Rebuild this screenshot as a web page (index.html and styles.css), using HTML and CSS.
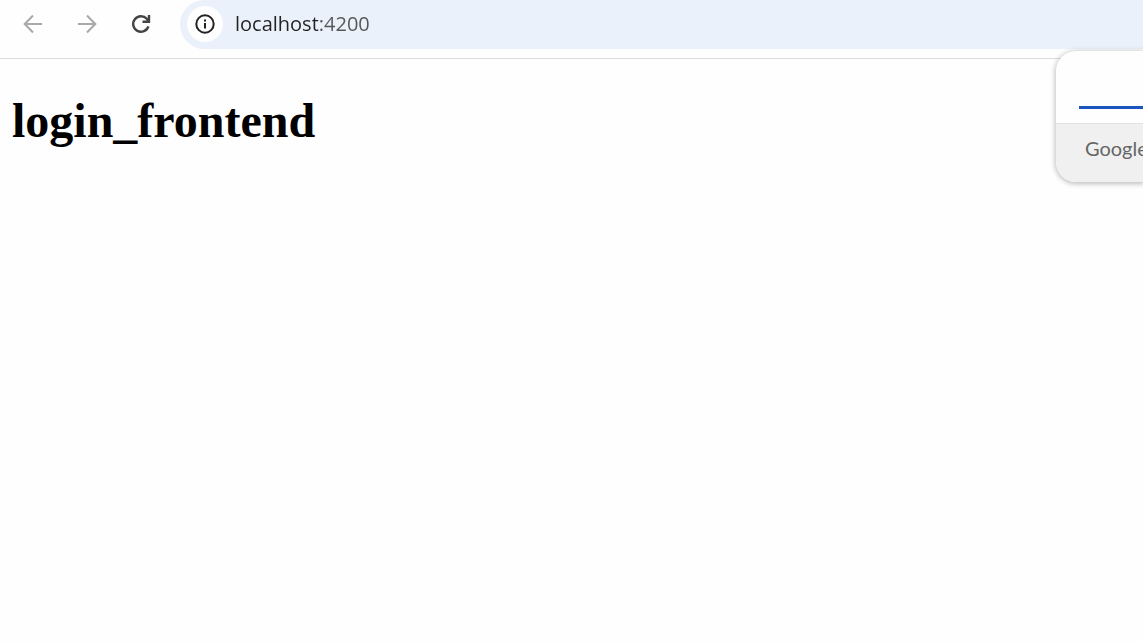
FILE: index.html
```html
<!DOCTYPE html>
<html lang="en">
<head>
<meta charset="utf-8">
<meta name="viewport" content="width=device-width, initial-scale=1">
<title>login_frontend</title>
<link rel="stylesheet" href="styles.css">
</head>
<body>
<header class="toolbar">
  <nav class="nav" aria-label="Browser navigation">
    <button class="nav-button" type="button" aria-label="Back">
      <svg viewBox="0 0 20 20"><path d="M19 10H2M10 1.5L1.7 10L10 18.5"/></svg>
    </button>
    <button class="nav-button" type="button" aria-label="Forward">
      <svg viewBox="0 0 20 20"><path d="M1 10H18M10 1.5L18.3 10L10 18.5"/></svg>
    </button>
    <button class="nav-button nav-button-active" type="button" aria-label="Reload">
      <svg viewBox="0 0 20 20"><path d="M17.4 12.4A7.8 7.8 0 1 1 15.8 4.8L17.8 7.2M18 1V7.7H11.5"/></svg>
    </button>
  </nav>
  <form class="omnibox">
    <button class="site-info" type="button" aria-label="View site information">
      <svg viewBox="0 0 20 20"><circle cx="10" cy="10" r="8.7"/><path d="M10 9V14.5M10 5.5V7.5"/></svg>
    </button>
    <input class="address" type="text" value="localhost:4200" aria-label="Address">
  </form>
</header>
<main class="page">
  <h1 class="title">login_frontend</h1>
</main>
<aside class="popup" aria-label="Google Translate">
  <div class="popup-tabs"><div class="popup-tab"></div></div>
  <div class="popup-footer">Google</div>
</aside>
</body>
</html>
```
FILE: styles.css
```css
* {
  box-sizing: border-box;
}

body {
  position: relative;
  min-height: 100vh;
  margin: 0;
  background: #fefefe;
  color: #000;
  font-family: "Liberation Serif", "Times New Roman", serif;
}

button {
  padding: 0;
  border: 0;
  background: none;
}

svg {
  display: block;
  fill: none;
  stroke: currentColor;
  stroke-width: 2;
}

.toolbar {
  display: flex;
  gap: 19px;
  padding-bottom: 9px;
  border-bottom: 1px solid #dcdcdc;
}

.nav {
  display: flex;
  align-items: center;
  gap: 14px;
  padding: 0 0 2px 13px;
}

.nav-button {
  display: grid;
  place-items: center;
  width: 40px;
  height: 40px;
  color: #a9a9a9;
}

.nav-button svg {
  width: 20px;
  height: 20px;
}

.nav-button-active {
  color: #444;
}

.nav-button-active svg {
  stroke-width: 2.4;
}

.omnibox {
  display: flex;
  flex: 1;
  align-items: center;
  gap: 12px;
  height: 49px;
  margin: 0;
  padding: 0 0 2px 7px;
  border-radius: 25px 0 0 25px;
  background: #eaf1fa;
}

.site-info {
  display: grid;
  place-items: center;
  width: 36px;
  height: 36px;
  border-radius: 50%;
  background: #fefefe;
  color: #222;
}

.site-info svg {
  width: 20px;
  height: 20px;
}

.address {
  flex: 1;
  min-width: 0;
  padding: 0;
  border: 0;
  outline: 0;
  background: linear-gradient(to right, #222 83px, #555 83px);
  background-clip: text;
  -webkit-background-clip: text;
  -webkit-text-fill-color: transparent;
  font-family: "Open Sans", "Segoe UI", sans-serif;
  font-size: 20px;
  line-height: 28px;
}

.page {
  padding: 34px 12px;
}

.title {
  margin: 0;
  font-size: 48px;
  line-height: 56px;
}

.popup {
  position: absolute;
  top: 51px;
  right: 0;
  width: 87px;
  overflow: hidden;
  border-radius: 20px 0 0 20px;
  background: #fefefe;
  box-shadow: 0 1px 5px 1px rgba(0, 0, 0, 0.25);
  clip-path: inset(-10px 0 -10px -10px);
}

.popup-tabs {
  padding: 0 0 14px 23px;
  border-bottom: 1px solid #e2e2e2;
}

.popup-tab {
  height: 58px;
  border-bottom: 3px solid #1a56bd;
}

.popup-footer {
  padding: 10px 0 20px 29px;
  background: #f0f0f0;
  color: #666;
  font-family: Lato, sans-serif;
  font-size: 20px;
  line-height: 28px;
}
```
